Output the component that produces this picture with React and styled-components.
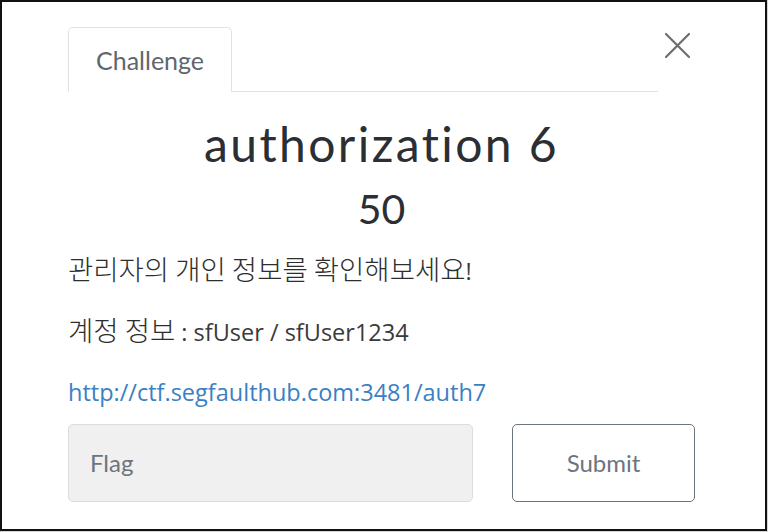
import React from 'react'
import styled, { createGlobalStyle } from 'styled-components'

const GlobalStyle = createGlobalStyle`
  html, body {
    margin: 0;
    padding: 0;
    background: #d6d6d6;
  }
  body {
    font-family: Lato, "Noto Sans CJK KR", sans-serif;
  }
`

const Frame = styled.div`
  box-sizing: border-box;
  width: 767px;
  height: 531px;
  border: 2px solid #111;
  background: #fff;
  padding: 25px 70px 0 66px;
  display: flex;
  flex-direction: column;
`

const Header = styled.div`
  display: flex;
  align-items: flex-start;
  gap: 6px;
`

const Nav = styled.div`
  flex: 1;
  display: flex;
  border-bottom: 1px solid #dee2e6;
`

const Tab = styled.div`
  box-sizing: border-box;
  height: 65px;
  margin-bottom: -1px;
  padding: 0 27px;
  display: flex;
  align-items: center;
  font-size: 25px;
  color: #5f666d;
  background: #fff;
  border: 1px solid #dee2e6;
  border-bottom-color: #fff;
  border-radius: 5px 5px 0 0;
`

const Close = styled.button`
  width: 31px;
  height: 31px;
  margin-top: 3px;
  padding: 0;
  border: none;
  background: transparent;
  display: flex;
  align-items: center;
  justify-content: flex-start;
`

const Title = styled.h3`
  margin: 23px 0 0;
  text-align: center;
  font-size: 48px;
  font-weight: 400;
  line-height: 1.2;
  letter-spacing: 2.4px;
  color: #2b2e33;
`

const Points = styled.h4`
  margin: 11px 0 0;
  text-align: center;
  font-size: 41px;
  font-weight: 400;
  line-height: 1.2;
  color: #2b2e33;
`

const Para = styled.p`
  margin: ${p => p.$top || 0}px 0 0;
  font-family: "Open Sans", "Noto Sans CJK KR", sans-serif;
  font-size: 23.5px;
  line-height: 30px;
  color: #3a3a3a;
`

const Hangul = styled.span`
  font-family: "Noto Sans CJK KR", sans-serif;
  font-size: 1.17em;
  font-weight: 300;
  line-height: 1;
  color: #2e2e2e;
`

const Link = styled.a`
  color: #3a80c3;
  text-decoration: none;
`

const FormRow = styled.div`
  display: flex;
  gap: 39px;
  margin-top: 17px;
`

const FlagInput = styled.input`
  box-sizing: border-box;
  width: 405px;
  height: 78px;
  padding: 0 21px;
  font-family: Lato, sans-serif;
  font-size: 24px;
  background: #f0f0f0;
  border: 1px solid #dcdcdc;
  border-radius: 5px;
  outline: none;
  &::placeholder {
    color: #6c757d;
  }
`

const SubmitButton = styled.button`
  box-sizing: border-box;
  width: 183px;
  height: 78px;
  font-family: Lato, sans-serif;
  font-size: 24px;
  color: #6c757d;
  background: #fff;
  border: 1px solid #6c757d;
  border-radius: 5px;
`

export default function App () {
  return (
    <>
      <GlobalStyle />
      <Frame>
        <Header>
          <Nav>
            <Tab>Challenge</Tab>
          </Nav>
          <Close aria-label='Close'>
            <svg width='27' height='27' viewBox='0 0 27 27'>
              <path d='M2 2 L25 25 M25 2 L2 25' stroke='#6e6e6e' strokeWidth='2.2' strokeLinecap='round' />
            </svg>
          </Close>
        </Header>
        <Title>authorization 6</Title>
        <Points>50</Points>
        <Para $top={22}><Hangul>관리자의 개인 정보를 확인해보세요</Hangul>!</Para>
        <Para $top={30}><Hangul>계정 정보</Hangul> : sfUser / sfUser1234</Para>
        <Para $top={30}>
          <Link href='#'>http://ctf.segfaulthub.com:3481/auth7</Link>
        </Para>
        <FormRow>
          <FlagInput placeholder='Flag' />
          <SubmitButton>Submit</SubmitButton>
        </FormRow>
      </Frame>
    </>
  )
}
